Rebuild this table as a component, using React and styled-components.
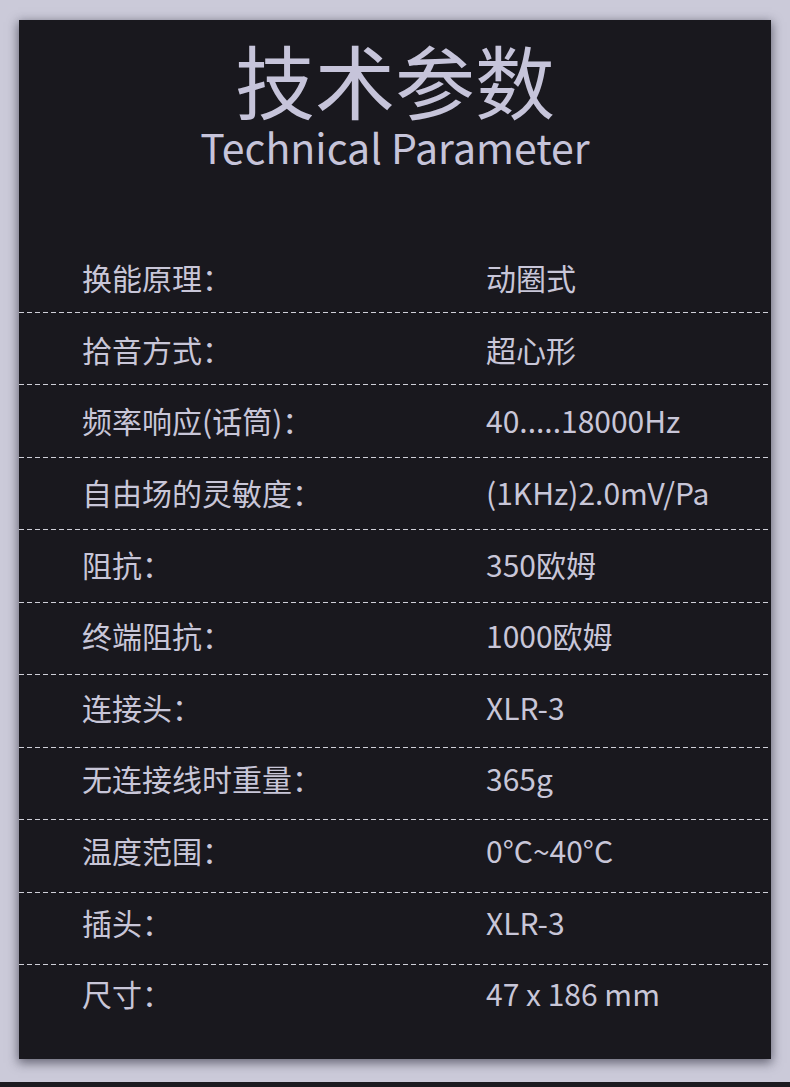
import React from 'react';
import styled, { createGlobalStyle } from 'styled-components';

const GlobalStyle = createGlobalStyle`
  html, body {
    margin: 0;
    padding: 0;
    background: #cbcad9;
  }
  body {
    font-family: 'Noto Sans CJK SC', 'Noto Sans', sans-serif;
  }
`;

const Page = styled.div`
  width: 790px;
  height: 1087px;
  display: flex;
  flex-direction: column;
  box-sizing: border-box;
  padding: 20px 19px 0 19px;
  background: #cbcad9;
  overflow: hidden;
`;

const Card = styled.div`
  width: 752px;
  height: 1039px;
  background: #19181e;
  box-shadow: 0 3px 10px 1px rgba(35, 35, 50, 0.6);
  display: flex;
  flex-direction: column;
  box-sizing: border-box;
`;

const Header = styled.div`
  height: 220px;
  display: flex;
  flex-direction: column;
  align-items: center;
  padding-top: 18px;
  box-sizing: border-box;
  color: #c6c4da;
`;

const MainTitle = styled.div`
  font-family: 'Noto Sans CJK SC', sans-serif;
  font-size: 80px;
  line-height: 80px;
`;

const SubTitle = styled.div`
  font-family: 'Noto Sans CJK SC', sans-serif;
  font-size: 41px;
  line-height: 44px;
  margin-top: 6px;
`;

const Rows = styled.div`
  display: flex;
  flex-direction: column;
`;

// text in the reference drifts a little against the dashed lines, shift tracks that
const Row = styled.div`
  height: 72.5px;
  box-sizing: border-box;
  display: grid;
  grid-template-columns: 404px 1fr;
  align-items: center;
  padding-left: 63px;
  padding-top: ${props => Math.max(0, props.shift)}px;
  padding-bottom: ${props => Math.max(0, -props.shift)}px;
  font-family: 'Noto Sans CJK SC', sans-serif;
  font-size: 30px;
  color: #c8c6d8;
  background-image: ${props => props.last ? 'none' : 'repeating-linear-gradient(to right, #cfcfd8 0 5px, transparent 5px 8px)'};
  background-size: 100% 1px;
  background-repeat: no-repeat;
  background-position: left bottom;
`;

const Label = styled.span``;

const Value = styled.span``;

const BottomStrip = styled.div`
  margin-top: auto;
  margin-left: -19px;
  width: 790px;
  height: 5px;
  background: #1c1b20;
`;

const specs = [
  ['换能原理：', '动圈式'],
  ['拾音方式：', '超心形'],
  ['频率响应(话筒)：', '40.....18000Hz'],
  ['自由场的灵敏度：', '(1KHz)2.0mV/Pa'],
  ['阻抗：', '350欧姆'],
  ['终端阻抗：', '1000欧姆'],
  ['连接头：', 'XLR-3'],
  ['无连接线时重量：', '365g'],
  ['温度范围：', '0°C~40°C'],
  ['插头：', 'XLR-3'],
  ['尺寸：', '47 x 186 mm'],
];

export default function App() {
  return (
    <Page>
      <GlobalStyle />
      <Card>
        <Header>
          <MainTitle>技术参数</MainTitle>
          <SubTitle>Technical Parameter</SubTitle>
        </Header>
        <Rows>
          {specs.map(([label, value], i) => (
            <Row
              key={label + i}
              last={i === specs.length - 1}
              shift={Math.round(2 - 1.8 * i)}
            >
              <Label>{label}</Label>
              <Value>{value}</Value>
            </Row>
          ))}
        </Rows>
      </Card>
      <BottomStrip />
    </Page>
  );
}
